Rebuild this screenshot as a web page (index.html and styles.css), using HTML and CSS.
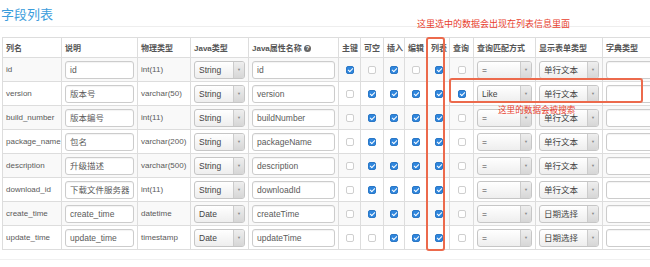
FILE: index.html
```html
<!DOCTYPE html>
<html lang="zh-CN">
<head>
    <meta charset="UTF-8">
    <title>字段列表</title>
    <link rel="stylesheet" href="styles.css">
</head>
<body>
    <div class="page">
        <div class="page-header">
            <h2 class="title">字段列表</h2>
        </div>

        <table class="field-table">
            <colgroup>
                <col style="width:59px"><col style="width:76px"><col style="width:53px"><col style="width:58px">
                <col style="width:90px"><col style="width:22px"><col style="width:23px"><col style="width:21px">
                <col style="width:23px"><col style="width:22px"><col style="width:24px"><col style="width:62px">
                <col style="width:67px"><col style="width:80px">
            </colgroup>
            <thead>
                <tr>
                    <th>列名</th>
                    <th>说明</th>
                    <th>物理类型</th>
                    <th>Java类型</th>
                    <th>Java属性名称 <span class="help">?</span></th>
                    <th>主键</th>
                    <th>可空</th>
                    <th>插入</th>
                    <th>编辑</th>
                    <th>列表</th>
                    <th>查询</th>
                    <th>查询匹配方式</th>
                    <th>显示表单类型</th>
                    <th>字典类型</th>
                </tr>
            </thead>
            <tbody>
                <tr>
                    <td>id</td>
                    <td><div class="input">id</div></td>
                    <td>int(11)</td>
                    <td><div class="sel"><span class="sel-text">String</span><span class="sel-arrow">▼</span></div></td>
                    <td><div class="input">id</div></td>
                    <td class="chk"><span class="cb on"></span></td>
                    <td class="chk"><span class="cb"></span></td>
                    <td class="chk"><span class="cb on"></span></td>
                    <td class="chk"><span class="cb"></span></td>
                    <td class="chk"><span class="cb on"></span></td>
                    <td class="chk"><span class="cb"></span></td>
                    <td><div class="sel"><span class="sel-text">=</span><span class="sel-arrow">▼</span></div></td>
                    <td><div class="sel"><span class="sel-text">单行文本</span><span class="sel-arrow">▼</span></div></td>
                    <td><div class="input"></div></td>
                </tr>
                <tr>
                    <td>version</td>
                    <td><div class="input">版本号</div></td>
                    <td>varchar(50)</td>
                    <td><div class="sel"><span class="sel-text">String</span><span class="sel-arrow">▼</span></div></td>
                    <td><div class="input">version</div></td>
                    <td class="chk"><span class="cb"></span></td>
                    <td class="chk"><span class="cb on"></span></td>
                    <td class="chk"><span class="cb on"></span></td>
                    <td class="chk"><span class="cb on"></span></td>
                    <td class="chk"><span class="cb on"></span></td>
                    <td class="chk"><span class="cb on"></span></td>
                    <td><div class="sel"><span class="sel-text">Like</span><span class="sel-arrow">▼</span></div></td>
                    <td><div class="sel"><span class="sel-text">单行文本</span><span class="sel-arrow">▼</span></div></td>
                    <td><div class="input"></div></td>
                </tr>
                <tr>
                    <td>build_number</td>
                    <td><div class="input">版本编号</div></td>
                    <td>int(11)</td>
                    <td><div class="sel"><span class="sel-text">String</span><span class="sel-arrow">▼</span></div></td>
                    <td><div class="input">buildNumber</div></td>
                    <td class="chk"><span class="cb"></span></td>
                    <td class="chk"><span class="cb on"></span></td>
                    <td class="chk"><span class="cb on"></span></td>
                    <td class="chk"><span class="cb on"></span></td>
                    <td class="chk"><span class="cb on"></span></td>
                    <td class="chk"><span class="cb"></span></td>
                    <td><div class="sel"><span class="sel-text">=</span><span class="sel-arrow">▼</span></div></td>
                    <td><div class="sel"><span class="sel-text">单行文本</span><span class="sel-arrow">▼</span></div></td>
                    <td><div class="input"></div></td>
                </tr>
                <tr>
                    <td>package_name</td>
                    <td><div class="input">包名</div></td>
                    <td>varchar(200)</td>
                    <td><div class="sel"><span class="sel-text">String</span><span class="sel-arrow">▼</span></div></td>
                    <td><div class="input">packageName</div></td>
                    <td class="chk"><span class="cb"></span></td>
                    <td class="chk"><span class="cb on"></span></td>
                    <td class="chk"><span class="cb on"></span></td>
                    <td class="chk"><span class="cb on"></span></td>
                    <td class="chk"><span class="cb on"></span></td>
                    <td class="chk"><span class="cb"></span></td>
                    <td><div class="sel"><span class="sel-text">=</span><span class="sel-arrow">▼</span></div></td>
                    <td><div class="sel"><span class="sel-text">单行文本</span><span class="sel-arrow">▼</span></div></td>
                    <td><div class="input"></div></td>
                </tr>
                <tr>
                    <td>description</td>
                    <td><div class="input">升级描述</div></td>
                    <td>varchar(500)</td>
                    <td><div class="sel"><span class="sel-text">String</span><span class="sel-arrow">▼</span></div></td>
                    <td><div class="input">description</div></td>
                    <td class="chk"><span class="cb"></span></td>
                    <td class="chk"><span class="cb on"></span></td>
                    <td class="chk"><span class="cb on"></span></td>
                    <td class="chk"><span class="cb on"></span></td>
                    <td class="chk"><span class="cb on"></span></td>
                    <td class="chk"><span class="cb"></span></td>
                    <td><div class="sel"><span class="sel-text">=</span><span class="sel-arrow">▼</span></div></td>
                    <td><div class="sel"><span class="sel-text">单行文本</span><span class="sel-arrow">▼</span></div></td>
                    <td><div class="input"></div></td>
                </tr>
                <tr>
                    <td>download_id</td>
                    <td><div class="input">下载文件服务器</div></td>
                    <td>int(11)</td>
                    <td><div class="sel"><span class="sel-text">String</span><span class="sel-arrow">▼</span></div></td>
                    <td><div class="input">downloadId</div></td>
                    <td class="chk"><span class="cb"></span></td>
                    <td class="chk"><span class="cb on"></span></td>
                    <td class="chk"><span class="cb on"></span></td>
                    <td class="chk"><span class="cb on"></span></td>
                    <td class="chk"><span class="cb on"></span></td>
                    <td class="chk"><span class="cb"></span></td>
                    <td><div class="sel"><span class="sel-text">=</span><span class="sel-arrow">▼</span></div></td>
                    <td><div class="sel"><span class="sel-text">单行文本</span><span class="sel-arrow">▼</span></div></td>
                    <td><div class="input"></div></td>
                </tr>
                <tr>
                    <td>create_time</td>
                    <td><div class="input">create_time</div></td>
                    <td>datetime</td>
                    <td><div class="sel"><span class="sel-text">Date</span><span class="sel-arrow">▼</span></div></td>
                    <td><div class="input">createTime</div></td>
                    <td class="chk"><span class="cb"></span></td>
                    <td class="chk"><span class="cb on"></span></td>
                    <td class="chk"><span class="cb on"></span></td>
                    <td class="chk"><span class="cb on"></span></td>
                    <td class="chk"><span class="cb on"></span></td>
                    <td class="chk"><span class="cb"></span></td>
                    <td><div class="sel"><span class="sel-text">=</span><span class="sel-arrow">▼</span></div></td>
                    <td><div class="sel"><span class="sel-text">日期选择</span><span class="sel-arrow">▼</span></div></td>
                    <td><div class="input"></div></td>
                </tr>
                <tr>
                    <td>update_time</td>
                    <td><div class="input">update_time</div></td>
                    <td>timestamp</td>
                    <td><div class="sel"><span class="sel-text">Date</span><span class="sel-arrow">▼</span></div></td>
                    <td><div class="input">updateTime</div></td>
                    <td class="chk"><span class="cb"></span></td>
                    <td class="chk"><span class="cb"></span></td>
                    <td class="chk"><span class="cb on"></span></td>
                    <td class="chk"><span class="cb on"></span></td>
                    <td class="chk"><span class="cb on"></span></td>
                    <td class="chk"><span class="cb"></span></td>
                    <td><div class="sel"><span class="sel-text">=</span><span class="sel-arrow">▼</span></div></td>
                    <td><div class="sel"><span class="sel-text">日期选择</span><span class="sel-arrow">▼</span></div></td>
                    <td><div class="input"></div></td>
                </tr>
            </tbody>
        </table>

        <div class="page-footer"></div>

        <!-- annotations drawn over the screenshot -->
        <div class="note note-list">这里选中的数据会出现在列表信息里面</div>
        <div class="mark mark-col"></div>
        <div class="mark mark-row"></div>
        <div class="note note-search">这里的数据会被搜索</div>
    </div>
</body>
</html>
```

FILE: styles.css
```css
:root {
    --title-color: #3c9ddc;
    --text-color: #5a5a5a;
    --border-color: #dddddd;
    --stripe-bg: #f9f9f9;
    --check-color: #2f86dd;
    --mark-color: #ec6a4c;
    --note-color: #e8402e;
}

* {
    margin: 0;
    padding: 0;
    box-sizing: border-box;
}

body {
    background: #fff;
    font-family: "Liberation Sans", Arial, "Noto Sans CJK SC", sans-serif;
    font-size: 8px;
    color: var(--text-color);
    overflow: hidden;
}

.page {
    position: relative;
    width: 650px;
    height: 267px;
    overflow: hidden;
}

.page-header {
    padding: 7px 0 5px 1px;
    border-bottom: 1px solid #eee;
}

.title {
    font-size: 13px;
    line-height: 14px;
    font-weight: normal;
    color: var(--title-color);
    font-family: "Noto Sans CJK SC", sans-serif;
}

.field-table {
    margin: 10px 0 0 2px;
    table-layout: fixed;
    width: 680px;
    border-collapse: collapse;
    border: 1px solid var(--border-color);
}

.field-table th,
.field-table td {
    border: 1px solid var(--border-color);
    padding: 0 3px;
    text-align: left;
    white-space: nowrap;
    overflow: hidden;
}

.field-table th {
    height: 20px;
    font-weight: bold;
    font-size: 8px;
    color: #555;
}

.field-table td {
    height: 24px;
}

.field-table tbody tr:nth-child(odd) {
    background: var(--stripe-bg);
}

.field-table td.chk {
    text-align: center;
    padding: 0;
}

.help {
    display: inline-block;
    width: 7px;
    height: 7px;
    line-height: 7px;
    border-radius: 50%;
    background: #666;
    color: #fff;
    font-size: 6px;
    text-align: center;
    vertical-align: middle;
}

.input {
    height: 18px;
    line-height: 16px;
    padding: 0 4px;
    border: 1px solid #ccc;
    border-radius: 3px;
    background: #fff;
    overflow: hidden;
    font-size: 8.5px;
    box-shadow: inset 0 1px 1px rgba(0, 0, 0, 0.05);
}

.sel {
    display: flex;
    height: 18px;
    border: 1px solid #c6c6c6;
    border-radius: 3px;
    background: linear-gradient(#ffffff, #eeeeee);
    overflow: hidden;
    font-size: 8.5px;
}

.sel-text {
    flex: 1;
    padding-left: 4px;
    line-height: 16px;
    color: #444;
}

.sel-arrow {
    width: 11px;
    border-left: 1px solid #ccc;
    background: linear-gradient(#eeeeee, #d6d6d6);
    color: #888;
    font-size: 4px;
    display: flex;
    align-items: center;
    justify-content: center;
}

.cb {
    display: inline-block;
    position: relative;
    width: 8px;
    height: 8px;
    border: 1px solid #cfcfcf;
    border-radius: 2px;
    background: #fff;
    vertical-align: middle;
}

.cb.on {
    background: var(--check-color);
    border-color: #2a77c6;
}

.cb.on::after {
    content: '';
    position: absolute;
    left: 2px;
    top: 0;
    width: 2px;
    height: 4px;
    border: solid #fff;
    border-width: 0 1px 1px 0;
    transform: rotate(45deg);
}

.page-footer {
    margin-top: 9px;
    border-top: 1px solid #f0f0f0;
}

.note {
    position: absolute;
    font-family: "Noto Sans CJK SC", sans-serif;
    font-size: 9px;
    line-height: 10px;
    color: var(--note-color);
    white-space: nowrap;
}

.note-list {
    left: 417px;
    top: 19px;
}

.note-search {
    left: 498px;
    top: 104px;
    font-size: 8.6px;
}

.mark {
    position: absolute;
    border: 2px solid var(--mark-color);
    border-radius: 3px;
}

.mark-col {
    left: 426px;
    top: 37px;
    width: 19px;
    height: 214px;
}

.mark-row {
    left: 449px;
    top: 78px;
    width: 194px;
    height: 25px;
}
```
